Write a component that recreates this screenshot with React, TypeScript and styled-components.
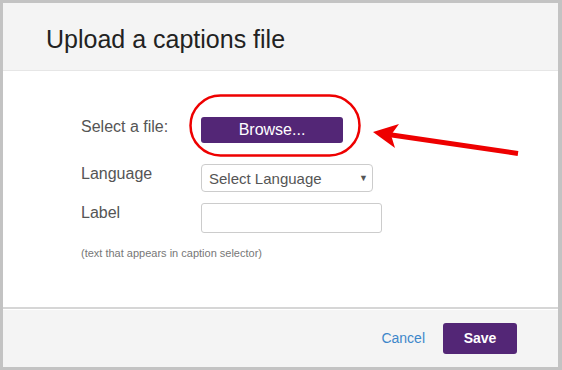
import React from "react";
import styled, { createGlobalStyle } from "styled-components";

const GlobalStyle = createGlobalStyle`
  html, body { margin: 0; padding: 0; background: #ffffff; }
  body { font-family: "Liberation Sans", Arial, sans-serif; }
  * { box-sizing: border-box; }
`;

const Frame = styled.div`
  position: relative;
  width: 562px;
  height: 370px;
  border: 3px solid #c3c3c3;
  border-right-width: 4px;
  display: flex;
  flex-direction: column;
  background: #ffffff;
`;

const Header = styled.header`
  height: 68px;
  background: #f4f4f4;
  border-bottom: 1px solid #e6e6e6;
  padding: 22px 0 0 43px;
`;

const Title = styled.h1`
  margin: 0;
  font-size: 25px;
  line-height: 28px;
  font-weight: 400;
  color: #222222;
`;

const Body = styled.main`
  flex: 1;
  padding: 46px 0 0 78px;
`;

const Field = styled.div<{ $gap: number }>`
  display: grid;
  grid-template-columns: 120px auto;
  align-items: start;
  margin-bottom: ${(p) => p.$gap}px;
`;

const Label = styled.label`
  font-size: 16px;
  line-height: 20px;
  color: #555555;
`;

const PurpleButton = styled.button<{ $w: number; $h: number; $bold?: boolean }>`
  width: ${(p) => p.$w}px;
  height: ${(p) => p.$h}px;
  border: none;
  border-radius: 3px;
  background: #532676;
  color: #ffffff;
  font-family: "Liberation Sans", Arial, sans-serif;
  font-size: ${(p) => (p.$bold ? 14 : 16)}px;
  font-weight: ${(p) => (p.$bold ? 700 : 400)};
  padding: 0;
  cursor: pointer;
`;

const SelectBox = styled.div`
  position: relative;
  width: 172px;
  height: 28px;
  border: 1px solid #cccccc;
  border-radius: 4px;
  display: flex;
  align-items: center;
  padding-left: 7px;
  font-size: 15px;
  color: #555555;
  &::after {
    content: "▼";
    position: absolute;
    right: 4px;
    top: 8px;
    font-size: 9px;
    color: #555555;
  }
`;

const TextInput = styled.input`
  width: 181px;
  height: 30px;
  border: 1px solid #cccccc;
  border-radius: 3px;
  padding: 0 8px;
  font-family: inherit;
  font-size: 15px;
  display: block;
`;

const Hint = styled.p`
  margin: 0;
  font-size: 11px;
  line-height: 13px;
  color: #777777;
`;

const Footer = styled.footer`
  height: 60px;
  background: #f4f4f4;
  border-top: 2px solid #d6d6d6;
  box-shadow: inset 0 1px 0 #ffffff;
  display: flex;
  justify-content: flex-end;
  align-items: center;
  gap: 18px;
  padding-right: 41px;
`;

const LinkButton = styled.a`
  font-size: 14px;
  color: #3d87ca;
  text-decoration: none;
  cursor: pointer;
`;

const Annotation = styled.svg`
  position: absolute;
  top: -3px;
  left: -3px;
  pointer-events: none;
`;

export default function App() {
  return (
    <>
      <GlobalStyle />
      <Frame>
        <Header>
          <Title>Upload a captions file</Title>
        </Header>
        <Body>
          <Field $gap={21}>
            <Label>Select a file:</Label>
            <PurpleButton $w={142} $h={26}>Browse...</PurpleButton>
          </Field>
          <Field $gap={11}>
            <Label>Language</Label>
            <SelectBox>Select Language</SelectBox>
          </Field>
          <Field $gap={14}>
            <Label>Label</Label>
            <TextInput type="text" />
          </Field>
          <Hint>(text that appears in caption selector)</Hint>
        </Body>
        <Footer>
          <LinkButton>Cancel</LinkButton>
          <PurpleButton $w={74} $h={31} $bold>
            Save
          </PurpleButton>
        </Footer>
        <Annotation width="562" height="370" viewBox="0 0 562 370">
          <rect x="190.5" y="95.5" width="169" height="60" rx="30" fill="none" stroke="#ee0000" strokeWidth="2.5" />
          <line x1="518" y1="153.5" x2="385" y2="134" stroke="#ee0000" strokeWidth="5" />
          <polygon points="373,132 399,124 391,135 395,148" fill="#ee0000" />
        </Annotation>
      </Frame>
    </>
  );
}
